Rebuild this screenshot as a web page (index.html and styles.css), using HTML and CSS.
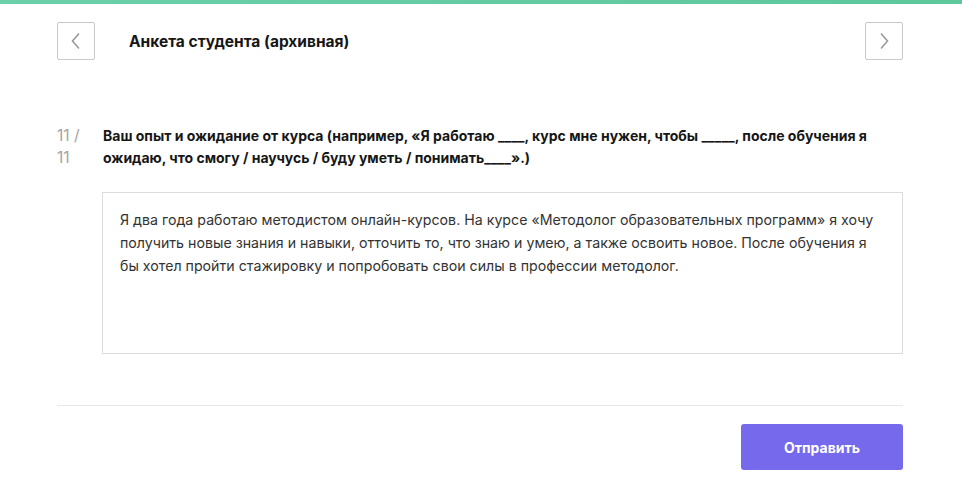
FILE: index.html
```html
<!DOCTYPE html>
<html lang="ru">
<head>
<meta charset="utf-8">
<link rel="stylesheet" href="styles.css">
</head>
<body>
<div class="topbar"></div>
<div class="page">
  <header class="header">
    <button class="nav-btn" aria-label="Назад">
      <svg width="12" height="18" viewBox="0 0 12 18"><path d="M9 1.5 2.5 9 9 16.5" fill="none" stroke="#9a9a9a" stroke-width="1.6"/></svg>
    </button>
    <h1 class="title">Анкета студента (архивная)</h1>
    <button class="nav-btn" aria-label="Вперёд">
      <svg width="12" height="18" viewBox="0 0 12 18"><path d="M3 1.5 9.5 9 3 16.5" fill="none" stroke="#9a9a9a" stroke-width="1.6"/></svg>
    </button>
  </header>

  <section class="question">
    <div class="q-num">11 /<br>11</div>
    <div class="q-body">
      <p class="q-text">Ваш опыт и ожидание от курса (например, «Я работаю ____, курс мне нужен, чтобы _____, после обучения я<br>ожидаю, что смогу / научусь / буду уметь / понимать____».)</p>
      <div class="answer">Я два года работаю методистом онлайн-курсов. На курсе «Методолог образовательных программ» я хочу<br>получить новые знания и навыки, отточить то, что знаю и умею, а также освоить новое. После обучения я<br>бы хотел пройти стажировку и попробовать свои силы в профессии методолог.</div>
    </div>
  </section>

  <div class="divider"></div>

  <div class="actions">
    <button class="submit">Отправить</button>
  </div>
</div>
</body>
</html>
```

FILE: styles.css
```css
* { box-sizing: border-box; }
html, body { margin: 0; padding: 0; background: #fff; }
body { font-family: Inter, "Open Sans", sans-serif; color: #1b1b1b; }

.topbar {
  height: 4px;
  background: linear-gradient(90deg, #6ccfa8, #5ec79c);
}

.page { padding: 0 59px 0 57px; }

.header {
  display: flex;
  align-items: center;
  margin-top: 18px;
  height: 38px;
}
.nav-btn {
  width: 38px;
  height: 38px;
  border: 1px solid #c9c9c9;
  border-radius: 2px;
  background: #fff;
  padding: 0;
  display: flex;
  align-items: center;
  justify-content: center;
  flex: none;
}
.title {
  flex: 1;
  margin: 0 0 0 34px;
  font-size: 15.5px;
  font-weight: 700;
  color: #161616;
}

.question {
  display: flex;
  margin-top: 65px;
}
.q-num {
  width: 46px;
  flex: none;
  font-size: 15.5px;
  line-height: 22px;
  color: #a3a3a3;
}
.q-body { flex: 1; }
.q-text {
  margin: 0;
  font-size: 14px;
  font-weight: 700;
  line-height: 22px;
  color: #161616;
  white-space: nowrap;
}
.answer {
  margin-top: 23px;
  margin-left: -1px;
  height: 162px;
  border: 1px solid #dcdcdc;
  padding: 15px 17px;
  font-size: 14.2px;
  line-height: 23px;
  color: #333;
  white-space: nowrap;
}

.divider {
  margin-top: 51px;
  height: 1px;
  background: #e8e8e8;
}

.actions {
  display: flex;
  justify-content: flex-end;
  margin-top: 18px;
}
.submit {
  width: 162px;
  height: 46px;
  border: none;
  border-radius: 3px;
  background: #7669ec;
  color: #fff;
  font-family: Inter, sans-serif;
  font-size: 14px;
  font-weight: 700;
}
```
